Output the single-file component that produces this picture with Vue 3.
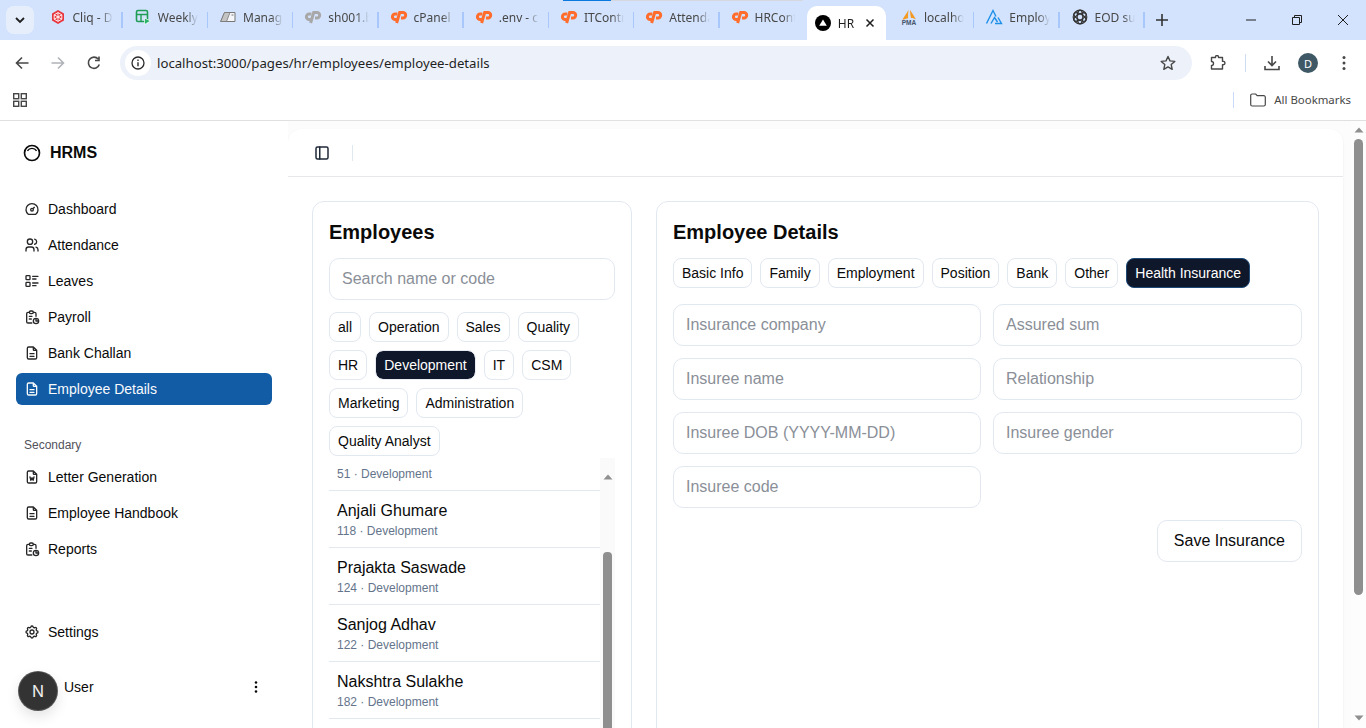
<script setup>
const tabs = [
  { id: 'cliq', label: 'Cliq - D' },
  { id: 'sheet', label: 'Weekly' },
  { id: 'manage', label: 'Manage' },
  { id: 'cpgrey', label: 'sh001.b' },
  { id: 'cp', label: 'cPanel' },
  { id: 'cp', label: '.env - c' },
  { id: 'cp', label: 'ITContr' },
  { id: 'cp', label: 'Attenda' },
  { id: 'cp', label: 'HRCont' },
  { id: 'next', label: 'HR', active: true },
  { id: 'pma', label: 'localho' },
  { id: 'emp', label: 'Employ' },
  { id: 'gpt', label: 'EOD su' }
]
const mainNav = [
  { label: 'Dashboard', icon: 'dash' },
  { label: 'Attendance', icon: 'users' },
  { label: 'Leaves', icon: 'list' },
  { label: 'Payroll', icon: 'report' },
  { label: 'Bank Challan', icon: 'doc' },
  { label: 'Employee Details', icon: 'doc', active: true }
]
const secondNav = [
  { label: 'Letter Generation', icon: 'word' },
  { label: 'Employee Handbook', icon: 'doc' },
  { label: 'Reports', icon: 'report' }
]
const icons = {
  dash: 'M12 13m-2 0a2 2 0 1 0 4 0a2 2 0 1 0 -4 0M13.45 11.55l2.05 -2.05M6.4 20a9 9 0 1 1 11.2 0z',
  users: 'M9 7m-4 0a4 4 0 1 0 8 0a4 4 0 1 0 -8 0M3 21v-2a4 4 0 0 1 4 -4h4a4 4 0 0 1 4 4v2M16 3.13a4 4 0 0 1 0 7.75M21 21v-2a4 4 0 0 0 -3 -3.85',
  list: 'M13 5h8M13 9h5M13 15h8M13 19h5M3 5a1 1 0 0 1 1 -1h4a1 1 0 0 1 1 1v4a1 1 0 0 1 -1 1h-4a1 1 0 0 1 -1 -1zM3 15a1 1 0 0 1 1 -1h4a1 1 0 0 1 1 1v4a1 1 0 0 1 -1 1h-4a1 1 0 0 1 -1 -1z',
  report: 'M8 5h-2a2 2 0 0 0 -2 2v12a2 2 0 0 0 2 2h5.697M18 14v4h4M18 11v-4a2 2 0 0 0 -2 -2h-2M8 5a2 2 0 0 1 2 -2h2a2 2 0 0 1 2 2v0a2 2 0 0 1 -2 2h-2a2 2 0 0 1 -2 -2zM18 18m-4 0a4 4 0 1 0 8 0a4 4 0 1 0 -8 0M8 11h4M8 15h3',
  doc: 'M14 3v4a1 1 0 0 0 1 1h4M17 21h-10a2 2 0 0 1 -2 -2v-14a2 2 0 0 1 2 -2h7l5 5v11a2 2 0 0 1 -2 2zM9 17h6M9 13h6',
  word: 'M14 3v4a1 1 0 0 0 1 1h4M17 21h-10a2 2 0 0 1 -2 -2v-14a2 2 0 0 1 2 -2h7l5 5v11a2 2 0 0 1 -2 2zM9 12l1.333 5l1.667 -4l1.667 4l1.333 -5',
  settings: 'M10.325 4.317c.426 -1.756 2.924 -1.756 3.35 0a1.724 1.724 0 0 0 2.573 1.066c1.543 -.94 3.31 .826 2.37 2.37a1.724 1.724 0 0 0 1.065 2.572c1.756 .426 1.756 2.924 0 3.35a1.724 1.724 0 0 0 -1.066 2.573c.94 1.543 -.826 3.31 -2.37 2.37a1.724 1.724 0 0 0 -2.572 1.065c-.426 1.756 -2.924 1.756 -3.35 0a1.724 1.724 0 0 0 -2.573 -1.066c-1.543 .94 -3.31 -.826 -2.37 -2.37a1.724 1.724 0 0 0 -1.065 -2.572c-1.756 -.426 -1.756 -2.924 0 -3.35a1.724 1.724 0 0 0 1.066 -2.573c-.94 -1.543 .826 -3.31 2.37 -2.37c1 .608 2.296 .07 2.572 -1.065zM9 12a3 3 0 1 0 6 0a3 3 0 0 0 -6 0'
}
const departments = ['all', 'Operation', 'Sales', 'Quality', 'HR', 'Development', 'IT', 'CSM', 'Marketing', 'Administration', 'Quality Analyst']
const employees = [
  { name: '', code: '51' },
  { name: 'Anjali Ghumare', code: '118' },
  { name: 'Prajakta Saswade', code: '124' },
  { name: 'Sanjog Adhav', code: '122' },
  { name: 'Nakshtra Sulakhe', code: '182' }
]
const detailTabs = ['Basic Info', 'Family', 'Employment', 'Position', 'Bank', 'Other', 'Health Insurance']
const fields = ['Insurance company', 'Assured sum', 'Insuree name', 'Relationship', 'Insuree DOB (YYYY-MM-DD)', 'Insuree gender', 'Insuree code']
</script>

<template>
  <div class="window">
    <div class="loadbar"><span class="load-blue"></span><span class="load-grey"></span></div>

    <header class="tabstrip">
      <div class="tabsearch">
        <svg width="12" height="12" viewBox="0 0 12 12"><path d="M2 4l4 4 4-4" fill="none" stroke="#1f1f1f" stroke-width="1.8"/></svg>
      </div>
      <div v-for="(t, i) in tabs" :key="i" class="tab" :class="{ active: t.active, nosep: t.active || (tabs[i + 1] && tabs[i + 1].active) }">
        <span class="fav">
          <svg v-if="t.id === 'cliq'" viewBox="0 0 16 16"><path d="M8 1l6 3.4v7.2L8 15l-6-3.4V4.400z" fill="#e8373f"/><path d="M8 3.600l3.800 2.200v4.400L8 12.400l-3.800-2.200V5.800zM8 3.600v8.800M4.200 5.800l7.600 4.400M11.800 5.800l-7.600 4.400" fill="none" stroke="#fff" stroke-width=".9"/></svg>
          <svg v-else-if="t.id === 'sheet'" viewBox="0 0 16 16"><rect x="1.500" y="1.500" width="11" height="11" rx="1.500" fill="none" stroke="#1f9d55" stroke-width="1.600"/><path d="M1.500 5.500h11M6 5.500v7" stroke="#1f9d55" stroke-width="1.400"/><path d="M9.500 9l6 3-6 3.500z" fill="#2ab36b" stroke="#fff" stroke-width=".7"/></svg>
          <svg v-else-if="t.id === 'manage'" viewBox="0 0 16 16"><path d="M4.500 3.500H15V12.500H0.700z" fill="#f4f6fa" stroke="#777" stroke-width="1"/><path d="M4.500 3.500L0.700 12.500H6.500L10 3.500z" fill="#c4c4c4" stroke="#777" stroke-width=".8"/><path d="M11.500 6h2" stroke="#777"/></svg>
          <svg v-else-if="t.id === 'cp' || t.id === 'cpgrey'" viewBox="0 0 16 16"><g fill="none" :stroke="t.id === 'cp' ? '#ff6c2c' : '#a8a8a8'" stroke-width="3"><path d="M6.400 5H4.200a2.800 2.800 0 0 0 0 5.600h1.600"/><path d="M5.600 14L8.700 3.500h3.300a2.700 2.700 0 0 1 0 5.400H10"/></g></svg>
          <svg v-else-if="t.id === 'next'" viewBox="0 0 16 16"><circle cx="8" cy="8" r="8" fill="#000"/><path d="M8 4.500l3.800 6.300H4.200z" fill="#fff"/></svg>
          <svg v-else-if="t.id === 'pma'" viewBox="0 0 16 16"><path d="M7.500 0.500C6.500 3.500 4 6 1.500 10.500c2 0 4-1 5.500-1.300 0-3 .2-5.700.5-8.700zM9 1c0 3 .5 5.500 1 8 2 0 3.500.5 5 1.500-1.800-3.500-4-6.500-6-9.500z" fill="#f39a25"/><text x="8" y="15.500" font-size="6.500" font-weight="700" text-anchor="middle" fill="#44546a" font-family="Liberation Sans, sans-serif">PMA</text></svg>
          <svg v-else-if="t.id === 'emp'" viewBox="0 0 16 16"><path d="M0.500 14.500L7 1.500l3 6M5 14.500l3.500-6 3 4.500M9 14.500h6.500L12 8.500" fill="none" stroke="#1d8fe8" stroke-width="1.400"/></svg>
          <svg v-else viewBox="0 0 16 16"><g fill="none" stroke="#333" stroke-width="1.200"><circle cx="8" cy="8" r="6.800"/><ellipse cx="8" cy="8" rx="6.800" ry="2.800" transform="rotate(30 8 8)"/><ellipse cx="8" cy="8" rx="6.800" ry="2.800" transform="rotate(90 8 8)"/><ellipse cx="8" cy="8" rx="6.800" ry="2.800" transform="rotate(150 8 8)"/></g></svg>
        </span>
        <span class="tab-label">{{ t.label }}</span>
        <svg v-if="t.active" class="tab-x" width="10" height="10" viewBox="0 0 10 10"><path d="M1.500 1.500l7 7M8.500 1.500l-7 7" stroke="#1f1f1f" stroke-width="1.500"/></svg>
      </div>
      <div class="newtab">
        <svg width="14" height="14" viewBox="0 0 14 14"><path d="M7 1v12M1 7h12" stroke="#333" stroke-width="1.600"/></svg>
      </div>
      <div class="winctl">
        <svg width="46" height="40" viewBox="0 0 46 40"><path d="M18 20h10" stroke="#1f1f1f"/></svg>
        <svg width="46" height="40" viewBox="0 0 46 40"><path d="M18.500 17.500h7v7h-7zM20.500 17.500v-2h7v7h-2" fill="none" stroke="#1f1f1f"/></svg>
        <svg width="46" height="40" viewBox="0 0 46 40"><path d="M18 15l10 10M28 15l-10 10" stroke="#1f1f1f"/></svg>
      </div>
    </header>

    <div class="toolbar">
      <svg class="tb-ic" width="16" height="16" viewBox="0 0 16 16"><path d="M14.500 8H2.500M8 2.500L2.500 8 8 13.500" fill="none" stroke="#474747" stroke-width="1.600"/></svg>
      <svg class="tb-ic" width="16" height="16" viewBox="0 0 16 16"><path d="M1.500 8h12M8 2.500L13.500 8 8 13.500" fill="none" stroke="#b0b3b8" stroke-width="1.600"/></svg>
      <svg class="tb-ic" width="16" height="16" viewBox="0 0 16 16"><path d="M13.300 9.500A5.600 5.600 0 1 1 12.200 4M13 1.500v4H9" fill="none" stroke="#474747" stroke-width="1.600"/></svg>
      <div class="omnibox">
        <span class="info">
          <svg width="14" height="14" viewBox="0 0 14 14"><circle cx="7" cy="7" r="6" fill="none" stroke="#2b2b2b" stroke-width="1.300"/><path d="M7 6.200v4M7 3.500v1.500" stroke="#2b2b2b" stroke-width="1.400"/></svg>
        </span>
        <span class="url">localhost:3000/pages/hr/employees/employee-details</span>
        <svg class="star" width="16" height="16" viewBox="0 0 16 16"><path d="M8 1.500l2 4.400 4.800.5-3.600 3.200 1 4.700L8 11.900l-4.200 2.400 1-4.700L1.200 6.400 6 5.900z" fill="none" stroke="#474747" stroke-width="1.400" stroke-linejoin="round"/></svg>
      </div>
      <svg class="ext" width="16" height="16" viewBox="0 0 16 16"><path d="M1.500 2.500h4V2a1.500 1.500 0 0 1 3 0v.5h4v3.700h.7a1.800 1.800 0 0 1 0 3.600h-.7v4.200h-11v-3.500a2 2 0 0 0 0-4z" fill="none" stroke="#474747" stroke-width="1.400" stroke-linejoin="round"/></svg>
      <span class="tb-sep"></span>
      <svg class="dl" width="16" height="16" viewBox="0 0 16 16"><path d="M8 1v9M4 6.500L8 10.500l4-4M1 11v3.500h14V11" fill="none" stroke="#474747" stroke-width="1.600"/></svg>
      <span class="profile">D</span>
      <svg class="kebab" width="4" height="16" viewBox="0 0 4 16"><circle cx="2" cy="2.500" r="1.500" fill="#474747"/><circle cx="2" cy="8" r="1.500" fill="#474747"/><circle cx="2" cy="13.500" r="1.500" fill="#474747"/></svg>
    </div>

    <div class="bookmarks">
      <svg width="14" height="14" viewBox="0 0 14 14"><g fill="none" stroke="#474747" stroke-width="1.400"><rect x=".700" y=".700" width="5" height="5"/><rect x="8.300" y=".700" width="5" height="5"/><rect x=".700" y="8.300" width="5" height="5"/><rect x="8.300" y="8.300" width="5" height="5"/></g></svg>
      <span class="bm-sep"></span>
      <svg width="16" height="14" viewBox="0 0 16 14"><path d="M.700 2.500a1.500 1.500 0 0 1 1.500-1.500h3.500l1.500 1.700h6.600a1.500 1.500 0 0 1 1.500 1.500v7.300a1.500 1.500 0 0 1-1.500 1.500H2.200a1.500 1.500 0 0 1-1.500-1.500z" fill="none" stroke="#474747" stroke-width="1.200"/></svg>
      <span class="bm-label">All Bookmarks</span>
    </div>

    <div class="app">
      <aside class="sidebar">
        <div class="brand">
          <svg width="20" height="20" viewBox="0 0 24 24" fill="none" stroke="#0a0a0a" stroke-width="2"><circle cx="12" cy="12" r="9"/><path d="M6.500 9.500A6.500 6.500 0 0 1 17.500 9.500" stroke-width="1.700"/></svg>
          <span>HRMS</span>
        </div>
        <nav class="nav">
          <a v-for="n in mainNav" :key="n.label" class="nav-item" :class="{ on: n.active }">
            <svg width="16" height="16" viewBox="0 0 24 24" fill="none" stroke="currentColor" stroke-width="2" stroke-linecap="round" stroke-linejoin="round"><path :d="icons[n.icon]"/></svg>
            <span>{{ n.label }}</span>
          </a>
        </nav>
        <div class="sec-label">Secondary</div>
        <nav class="nav">
          <a v-for="n in secondNav" :key="n.label" class="nav-item">
            <svg width="16" height="16" viewBox="0 0 24 24" fill="none" stroke="currentColor" stroke-width="2" stroke-linecap="round" stroke-linejoin="round"><path :d="icons[n.icon]"/></svg>
            <span>{{ n.label }}</span>
          </a>
        </nav>
        <a class="nav-item settings">
          <svg width="16" height="16" viewBox="0 0 24 24" fill="none" stroke="currentColor" stroke-width="2" stroke-linecap="round" stroke-linejoin="round"><path :d="icons.settings"/></svg>
          <span>Settings</span>
        </a>
        <div class="user">
          <span class="user-name">User</span>
          <svg width="4" height="14" viewBox="0 0 4 14"><circle cx="2" cy="2.500" r="1.300" fill="#0a0a0a"/><circle cx="2" cy="7" r="1.300" fill="#0a0a0a"/><circle cx="2" cy="11.500" r="1.300" fill="#0a0a0a"/></svg>
          <span class="next-badge">N</span>
        </div>
      </aside>

      <main class="main">
        <div class="topbar">
          <svg width="18" height="18" viewBox="0 0 24 24" fill="none" stroke="#1f2937" stroke-width="2" stroke-linecap="round" stroke-linejoin="round"><rect x="4" y="4" width="16" height="16" rx="2"/><path d="M9 4v16"/></svg>
          <span class="topbar-sep"></span>
        </div>
        <div class="content">
          <section class="card left">
            <h2>Employees</h2>
            <input class="field" placeholder="Search name or code" />
            <div class="chips">
              <button v-for="d in departments" :key="d" class="chip" :class="{ dark: d === 'Development' }">{{ d }}</button>
            </div>
            <div class="listwrap">
              <ul class="list">
                <li v-for="e in employees" :key="e.code" class="row">
                  <div v-if="e.name" class="row-name">{{ e.name }}</div>
                  <div class="row-sub">{{ e.code }} · Development</div>
                </li>
              </ul>
              <div class="track">
                <svg class="arrow" width="10" height="6" viewBox="0 0 10 6"><path d="M5 0.500L9.500 5.500H0.500z" fill="#8f8f8f"/></svg>
                <span class="thumb"></span>
              </div>
            </div>
          </section>
          <section class="card right">
            <h2>Employee Details</h2>
            <div class="chips">
              <button v-for="t in detailTabs" :key="t" class="chip" :class="{ dark: t === 'Health Insurance', ring: t === 'Health Insurance' }">{{ t }}</button>
            </div>
            <div class="form">
              <input v-for="f in fields" :key="f" class="field" :placeholder="f" />
            </div>
            <div class="actions"><button class="save">Save Insurance</button></div>
          </section>
        </div>
      </main>

      <div class="pagebar">
        <svg class="arrow" width="10" height="6" viewBox="0 0 10 6"><path d="M5 0.500L9.500 5.500H0.500z" fill="#8f8f8f"/></svg>
        <span class="pagethumb"></span>
        <svg class="arrow down" width="10" height="6" viewBox="0 0 10 6"><path d="M5 5.500L9.500 0.500H0.500z" fill="#8f8f8f"/></svg>
      </div>
    </div>
  </div>
</template>

<style>
html, body { margin: 0; height: 728px; overflow: hidden; background: #fff; }
</style>

<style scoped>
* { box-sizing: border-box; }
.window { position: relative; width: 1366px; height: 728px; overflow: hidden; font-family: "Liberation Sans", Arial, sans-serif; color: #0a0a0a; background: #fff; display: flex; flex-direction: column; }
.loadbar { position: absolute; top: 0; left: 563px; display: flex; height: 1px; z-index: 3; }
.load-blue { width: 48px; background: #0b78e0; }
.load-grey { width: 192px; background: #d5d9df; }

.tabstrip { height: 40px; flex: none; background: #d3e3fd; display: flex; align-items: flex-start; font-family: "Noto Sans", "Open Sans", sans-serif; font-size: 12px; color: #474747; }
.tabsearch { width: 28px; height: 28px; margin: 6px 3.500px 0 6px; border-radius: 8px; background: #e6eefc; display: flex; align-items: center; justify-content: center; flex: none; }
.tab { position: relative; width: 85.250px; height: 40px; flex: none; display: flex; align-items: center; padding: 0 10px 6px 12px; }
.tab::after { content: ""; position: absolute; right: 0; top: 12px; height: 16px; width: 1.500px; background: #a8c7fa; }
.tab.nosep::after { display: none; }
.tab.active { background: #fff; margin: 6px 3.250px 0 2px; width: 79px; height: 34px; border-radius: 10px 10px 0 0; padding: 0 8px; color: #1f1f1f; }
.fav { width: 16px; height: 16px; flex: none; margin-right: 7px; display: block; }
.fav svg { display: block; width: 16px; height: 16px; overflow: visible; }
.tab-label { flex: 1; min-width: 0; overflow: hidden; white-space: nowrap; -webkit-mask-image: linear-gradient(90deg, #000 70%, transparent); mask-image: linear-gradient(90deg, #000 70%, transparent); }
.tab-x { flex: none; margin-left: 6px; margin-right: 3px; }
.newtab { width: 30px; height: 40px; flex: none; display: flex; align-items: center; justify-content: center; margin-left: 2px; }
.winctl { margin-left: auto; display: flex; width: 138px; flex: none; }

.toolbar { height: 40px; flex: none; background: #fff; border-radius: 10px 10px 0 0; display: flex; align-items: center; padding-top: 6px; position: relative; }
.tb-ic { flex: none; margin-left: 14px; margin-right: 6px; }
.omnibox { width: 1072px; height: 34px; flex: none; margin-left: 12px; background: #edf2fa; border-radius: 17px; display: flex; align-items: center; padding: 0 16px 0 5px; }
.info { width: 26px; height: 26px; flex: none; border-radius: 50%; background: #fff; display: flex; align-items: center; justify-content: center; margin-right: 6px; }
.url { font-family: "Noto Sans", "Open Sans", sans-serif; font-size: 13.200px; color: #1f1f1f; white-space: nowrap; flex: 1; }
.star { flex: none; }
.ext { flex: none; margin-left: 18px; }
.tb-sep { width: 1px; height: 18px; background: #cfdcf2; margin-left: 19px; flex: none; }
.dl { flex: none; margin-left: 18px; }
.profile { width: 20px; height: 20px; border-radius: 50%; background: #3f5866; color: #fff; font-family: "Noto Sans", sans-serif; font-size: 11px; display: flex; align-items: center; justify-content: center; margin-left: 18px; flex: none; }
.kebab { flex: none; margin-left: 24px; }

.bookmarks { height: 41px; flex: none; border-bottom: 1px solid #e0e0e0; display: flex; align-items: center; padding: 0 15px 1px 13px; background: #fff; }
.bm-sep { width: 1.500px; height: 16px; background: #c9dbf8; margin-left: auto; margin-right: 16px; }
.bm-label { font-family: "Noto Sans", "Open Sans", sans-serif; font-size: 11.400px; color: #474747; margin-left: 8px; }

.app { flex: 1; min-height: 0; display: flex; overflow: hidden; background: #fcfcfc; }
.sidebar { width: 288px; flex: none; position: relative; padding: 0 16px; display: flex; flex-direction: column; font-size: 14px; background: #fff; }
.brand { height: 64px; flex: none; padding: 0 6px; margin-bottom: 8px; display: flex; align-items: center; gap: 8px; font-size: 16px; font-weight: 700; }
.nav { display: flex; flex-direction: column; gap: 4px; }
.nav-item { height: 32px; display: flex; align-items: center; gap: 8px; padding: 0 8px; border-radius: 6px; color: #0a0a0a; }
.nav-item svg { flex: none; color: #27272a; }
.nav-item.on { background: #125ca6; color: #f8fafc; }
.nav-item.on svg { color: #f8fafc; }
.sec-label { margin-top: 24px; height: 32px; padding: 0 8px; font-size: 12px; line-height: 32px; color: #52525b; }
.settings { margin-top: auto; margin-bottom: 16px; }
.user { position: relative; height: 50px; margin-bottom: 14px; padding: 0 14px 4px 48px; display: flex; align-items: center; justify-content: space-between; }
.next-badge { position: absolute; left: 3px; top: 8px; width: 38px; height: 38px; border-radius: 50%; background: #333; color: #eee; display: flex; align-items: center; justify-content: center; font-size: 16px; box-shadow: 0 0 0 1px #555, 0 6px 14px rgba(0,0,0,.12); font-family: "Inter", sans-serif; }

.main { width: 1055px; flex: none; margin: 8px 8px 0 0; background: #fff; border-radius: 14px 14px 0 0; box-shadow: 0 1px 3px rgba(0,0,0,.06); overflow: hidden; display: flex; flex-direction: column; }
.topbar { height: 48px; flex: none; border-bottom: 1px solid #e5e7eb; display: flex; align-items: center; padding: 0 24px 0 25px; }
.topbar-sep { width: 1px; height: 16px; background: #e2e8f0; margin-left: 21px; }
.content { flex: 1; padding: 24px; display: flex; gap: 24px; align-items: flex-start; }
.card { background: #fff; border: 1px solid #e2e8f0; border-radius: 12px; padding: 16px; height: 600px; flex: none; display: flex; flex-direction: column; }
.left { width: 320px; }
.right { width: 663px; }
h2 { margin: 0 0 12px; font-size: 20px; line-height: 28px; font-weight: 700; color: #0a0a0a; }
.field { width: 100%; height: 42px; border: 1px solid #e2e8f0; border-radius: 10px; padding: 0 12px; font: 16px "Liberation Sans", Arial, sans-serif; color: #0a0a0a; background: #fff; outline: none; }
.field::placeholder { color: #8a8f98; opacity: 1; }
.chips { display: flex; flex-wrap: wrap; gap: 8px; margin-top: 12px; }
.right .chips { margin-top: 0; }
.chip { height: 30px; padding: 0 8px; border: 1px solid #e2e8f0; border-radius: 8px; background: #fff; color: #0a0a0a; font: 14px "Liberation Sans", Arial, sans-serif; }
.chip.dark { background: #0f172a padding-box; color: #fff; border-color: #e8ecf2; }
.chip.ring { background: #0f172a; border-color: #1e4a7a; }
.listwrap { display: flex; margin-top: 2px; flex: 1; min-height: 0; overflow: hidden; }
.list { flex: 1; min-width: 0; margin: 0; padding: 0; list-style: none; }
.row { padding: 8px; border-bottom: 1px solid #e2e8f0; }
.row-name { font-size: 16px; line-height: 24px; color: #0a0a0a; }
.row-sub { font-size: 12px; line-height: 16px; color: #64748b; }
.track { width: 15px; flex: none; background: #fafafa; display: flex; flex-direction: column; align-items: center; padding-top: 16px; }
.arrow { flex: none; display: block; }
.thumb { width: 9px; flex: none; height: 300px; margin-top: 72px; background: #8f8f8f; border-radius: 4px 4px 0 0; }
.form { display: grid; grid-template-columns: 308px 309px; gap: 12px; margin-top: 16px; }
.actions { display: flex; justify-content: flex-end; margin-top: 12px; }
.save { height: 42px; padding: 0 16px; border: 1px solid #e2e8f0; border-radius: 10px; background: #fff; color: #0a0a0a; font: 16px "Liberation Sans", Arial, sans-serif; }

.pagebar { width: 15px; flex: none; background: #fdfdfd; display: flex; flex-direction: column; align-items: center; padding: 6px 0 7px; }
.pagethumb { width: 9px; height: 456px; flex: none; margin-top: 6px; border-radius: 5px; background: #8f8f8f; }
.arrow.down { margin-top: auto; }
</style>
